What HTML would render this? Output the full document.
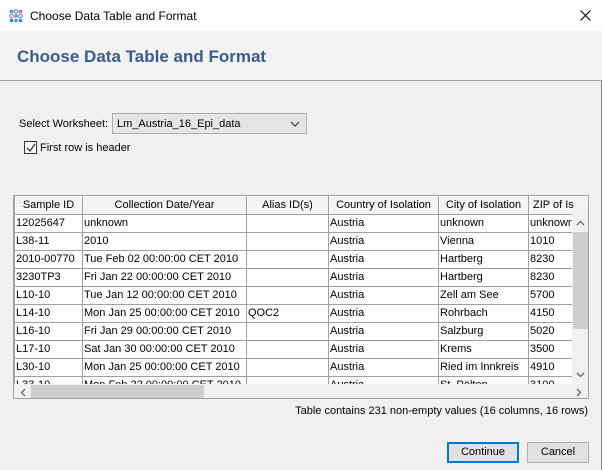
<!DOCTYPE html>
<html><head><style>
*{box-sizing:border-box;margin:0;padding:0}
body{width:602px;height:470px;background:#f0f0f0;font-family:"Liberation Sans",sans-serif;font-size:11px;color:#000;position:relative;overflow:hidden}
.abs{position:absolute}
#tb{left:0;top:0;width:602px;height:31px;background:#fff}
#hd{left:0;top:31px;width:602px;height:50px;background:#f3f3f3;border-bottom:1px solid #a0a0a0}
table{border-collapse:collapse;table-layout:fixed}
td{border:1px solid #a0a0a0;height:18px;padding:0 1px;white-space:nowrap;overflow:hidden;background:#fff;font-size:11px}
th{height:18px;font-weight:normal;background:#f3f3f3;border:1px solid #a0a0a0;border-top:none;white-space:nowrap;overflow:hidden;font-size:11px;box-shadow:inset 1px 1px #fff}
.btn{height:21px;border:1px solid #adadad;background:#e1e1e1;text-align:center;line-height:19px}
</style></head><body>
<div class="abs" style="right:0;top:0;width:1px;height:470px;background:#888"></div>
<div id="tb" class="abs">
<svg class="abs" style="left:9px;top:9px" width="14" height="14" viewBox="0 0 14 14">
<circle cx="2.5" cy="2.5" r="1.8" fill="#3aa0e0"/><circle cx="7" cy="2.5" r="1.8" fill="none" stroke="#3a7fd0" stroke-width="1"/><circle cx="11.5" cy="2.5" r="1.8" fill="#e060a0"/>
<circle cx="2.5" cy="7" r="1.8" fill="none" stroke="#e060a0" stroke-width="1"/><circle cx="7" cy="7" r="1.8" fill="#3aa0e0"/><circle cx="11.5" cy="7" r="1.8" fill="none" stroke="#3a7fd0" stroke-width="1"/>
<circle cx="2.5" cy="11.5" r="1.8" fill="#3a7fd0"/><circle cx="7" cy="11.5" r="1.8" fill="#3aa0e0"/><circle cx="11.5" cy="11.5" r="1.8" fill="#3a7fd0"/></svg>
<div class="abs" style="left:30px;top:9px;font-size:12px">Choose Data Table and Format</div>
<svg class="abs" style="left:580px;top:10px" width="11" height="11"><path d="M0.5 0.5 L10.5 10.5 M10.5 0.5 L0.5 10.5" stroke="#000" stroke-width="1.1"/></svg>
</div>
<div id="hd" class="abs"><div class="abs" style="left:17px;top:16px;font-size:17px;font-weight:bold;color:#3a5b8c">Choose Data Table and Format</div></div>
<div class="abs" style="left:19px;top:118px">Select Worksheet:</div>
<div class="abs" style="left:112px;top:113px;width:195px;height:21px;border:1px solid #adadad;background:#e5e5e5;padding:4px 4px">Lm_Austria_16_Epi_data
<svg class="abs" style="right:6px;top:7px" width="10" height="6"><path d="M1 1 L5 5 L9 1" fill="none" stroke="#333" stroke-width="1.2"/></svg></div>
<div class="abs" style="left:24px;top:141px;width:13px;height:13px;border:1px solid #333;background:#fff"><svg class="abs" style="left:1px;top:1px" width="10" height="10"><path d="M1 5 L4 8 L9 1" fill="none" stroke="#333" stroke-width="1.3"/></svg></div>
<div class="abs" style="left:40px;top:142px">First row is header</div>
<div class="abs" style="left:13px;top:195px;width:576px;height:204px;border:1px solid #a0a0a0;background:#f0f0f0;overflow:hidden">
<table style="width:600px">
<colgroup><col style="width:68px"><col style="width:164px"><col style="width:82px"><col style="width:110px"><col style="width:90px"><col style="width:86px"></colgroup>
<tr><th>Sample ID</th><th>Collection Date/Year</th><th>Alias ID(s)</th><th>Country of Isolation</th><th>City of Isolation</th><th style="text-align:left;padding-left:4px">ZIP of Is</th></tr>
<tr><td>12025647</td><td>unknown</td><td></td><td>Austria</td><td>unknown</td><td>unknown</td></tr>
<tr><td>L38-11</td><td>2010</td><td></td><td>Austria</td><td>Vienna</td><td>1010</td></tr>
<tr><td>2010-00770</td><td>Tue Feb 02 00:00:00 CET 2010</td><td></td><td>Austria</td><td>Hartberg</td><td>8230</td></tr>
<tr><td>3230TP3</td><td>Fri Jan 22 00:00:00 CET 2010</td><td></td><td>Austria</td><td>Hartberg</td><td>8230</td></tr>
<tr><td>L10-10</td><td>Tue Jan 12 00:00:00 CET 2010</td><td></td><td>Austria</td><td>Zell am See</td><td>5700</td></tr>
<tr><td>L14-10</td><td>Mon Jan 25 00:00:00 CET 2010</td><td>QOC2</td><td>Austria</td><td>Rohrbach</td><td>4150</td></tr>
<tr><td>L16-10</td><td>Fri Jan 29 00:00:00 CET 2010</td><td></td><td>Austria</td><td>Salzburg</td><td>5020</td></tr>
<tr><td>L17-10</td><td>Sat Jan 30 00:00:00 CET 2010</td><td></td><td>Austria</td><td>Krems</td><td>3500</td></tr>
<tr><td>L30-10</td><td>Mon Jan 25 00:00:00 CET 2010</td><td></td><td>Austria</td><td>Ried im Innkreis</td><td>4910</td></tr>
<tr><td>L33-10</td><td>Mon Feb 22 00:00:00 CET 2010</td><td></td><td>Austria</td><td>St. Pölten</td><td>3100</td></tr>
</table>
<div class="abs" style="left:558px;top:18px;width:17px;height:170px;background:#f0f0f0">
<svg class="abs" style="left:4px;top:6px" width="9" height="6"><path d="M1 5 L4.5 1.5 L8 5" fill="none" stroke="#555" stroke-width="1.2"/></svg>
<div class="abs" style="left:1px;top:18px;width:15px;height:97px;background:#cdcdcd"></div>
<svg class="abs" style="left:4px;top:158px" width="9" height="6"><path d="M1 1 L4.5 4.5 L8 1" fill="none" stroke="#555" stroke-width="1.2"/></svg></div>
<div class="abs" style="left:0;top:188px;width:576px;height:15px;background:#f0f0f0">
<svg class="abs" style="left:6px;top:4px" width="6" height="9"><path d="M5 1 L1.5 4.5 L5 8" fill="none" stroke="#555" stroke-width="1.2"/></svg>
<div class="abs" style="left:17px;top:1px;width:173px;height:13px;background:#cdcdcd"></div>
<svg class="abs" style="left:562px;top:4px" width="6" height="9"><path d="M1 1 L4.5 4.5 L1 8" fill="none" stroke="#555" stroke-width="1.2"/></svg></div>
</div>
<div class="abs" style="right:14px;top:405px">Table contains 231 non-empty values (16 columns, 16 rows)</div>
<div class="abs btn" style="left:447px;top:442px;width:72px;border:2px solid #0078d7;line-height:17px">Continue</div>
<div class="abs btn" style="left:527px;top:442px;width:62px">Cancel</div>
</body></html>
